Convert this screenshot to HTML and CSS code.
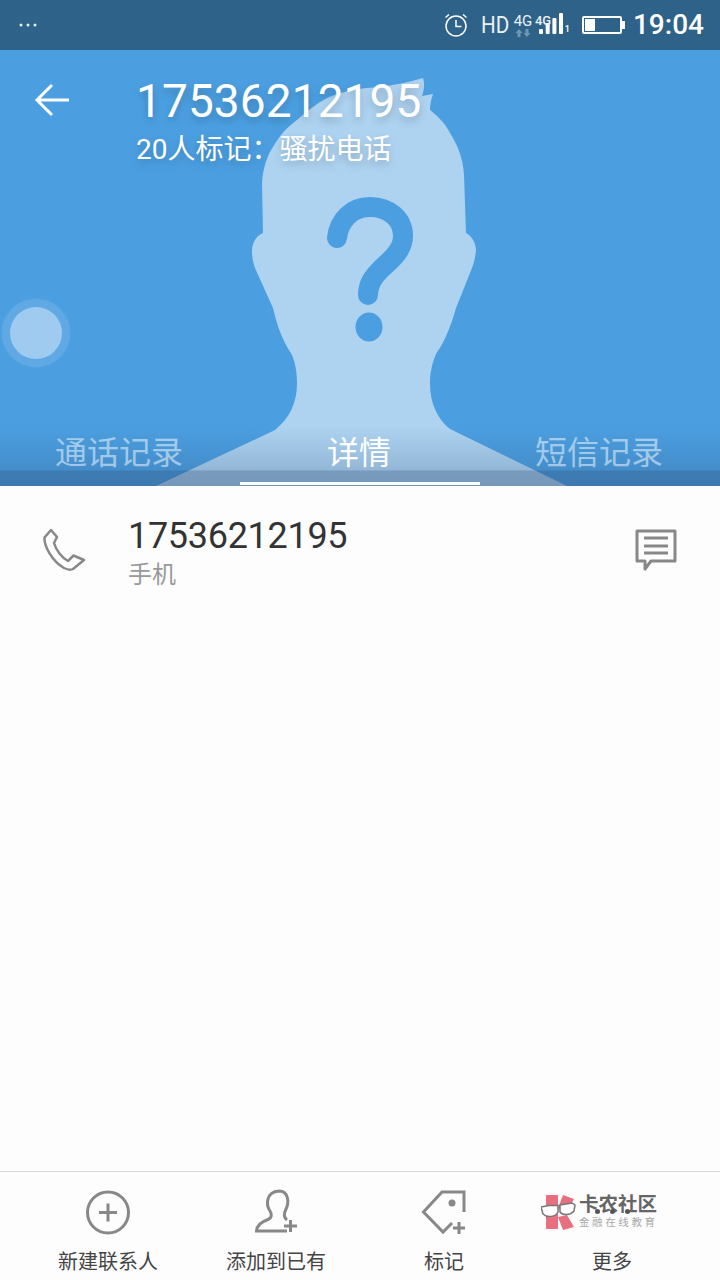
FILE: index.html
```html
<!DOCTYPE html>
<html lang="zh-CN">
<head>
  <meta charset="UTF-8" />
  <meta name="viewport" content="width=device-width, initial-scale=1.0"/>
  <title>17536212195</title>
  <link rel="stylesheet" href="styles.css">
</head>
<body>
  <div class="status-bar">
    <svg class="status-more" width="18" height="4" viewBox="0 0 18 4"><circle cx="2" cy="2" r="1.5"/><circle cx="9" cy="2" r="1.5"/><circle cx="16" cy="2" r="1.5"/></svg>
    <div class="status-right">
      <svg class="alarm" width="24" height="24" viewBox="0 0 24 24">
        <circle cx="12" cy="13" r="10"/>
        <path d="M12 7v6.500h5.500"/>
        <path d="M1.500 4.500 5 1.500M22.500 4.500 19 1.500"/>
      </svg>
      <span class="hd">HD</span>
      <div class="net">
        <span class="net-label">4G</span>
        <svg width="16" height="8" viewBox="0 0 16 8"><path d="M4 0 7.500 4H5.500V8H2.500V4H.5ZM12 8 8.500 4H10.500V0H13.500V4H15.500Z"/></svg>
      </div>
      <div class="signal">
        <span class="net-label small">4G</span>
        <svg width="25" height="22" viewBox="0 0 25 22">
          <rect x="0" y="16" width="4" height="5" rx="1"/>
          <rect x="6.700" y="10" width="4" height="11" rx="1"/>
          <rect x="13.400" y="5" width="4" height="16" rx="1"/>
          <rect x="20" y="0" width="4" height="21" rx="1"/>
        </svg>
        <span class="sim">1</span>
      </div>
      <div class="battery"><div class="battery-level"></div></div>
      <span class="clock">19:04</span>
    </div>
  </div>

  <section class="hero">
    <!-- unknown caller silhouette -->
    <svg class="silhouette" width="720" height="436" viewBox="0 50 720 436">
      <path class="head" d="M423 78 C425 84 424 90 422 96 L433 94 C431 100 430 105 430 110 C440 118 446 125 450 133 C458 146 463 158 464 175 L466 233 C472 236 476 243 476 251 C475 258 474 263 472 268 L456 308 C452 322 446 340 436 354 C431 366 430 375 430 384 C430 402 437 419 450 429 L567 486 H156 L275 430 C290 418 297 402 297 384 C297 374 296 365 292 355 C282 340 277 325 273 308 L255 268 C253 262 252 257 252 251 C252 243 256 236 263 233 L262 183 C263 168 267 156 273 147 C279 136 287 127 297 120 C306 112 316 104 327 98 C346 90 362 88 380 87 C395 85 410 82 423 78 Z"/>
      <path class="mark" d="M337 238 C339 220 352 207 370 207 C389 207 403 219 403 236 C403 250 392 259 382 268 C373 277 368 284 368 295"/>
      <ellipse class="mark-dot" cx="369" cy="327" rx="13.500" ry="14.500"/>
    </svg>

    <div class="hero-head">
      <svg class="back" width="36" height="34" viewBox="0 0 36 34"><path d="M35 17H3M18 2 3 17 18 32"/></svg>
      <div>
        <h1 class="hero-number">17536212195</h1>
        <p class="hero-tag">20人标记：骚扰电话</p>
      </div>
    </div>

    <div class="tabs">
      <div class="tab">通话记录</div>
      <div class="tab active">详情</div>
      <div class="tab">短信记录</div>
    </div>
    <div class="float-ball"></div>
  </section>

  <main class="detail">
    <div class="phone-row">
      <svg class="row-icon phone" width="44" height="44" viewBox="42 528 44 44">
        <path d="M51 530 44.500 537.500C44 546 52 561 64 568C67 569.500 71 570 73 569L84 560 73.500 555.500 68 561C62 558 56 550 54 543L57 537Z"/>
      </svg>
      <div class="row-text">
        <div class="row-number">17536212195</div>
        <div class="row-kind">手机</div>
      </div>
      <svg class="row-icon" width="44" height="44" viewBox="634 528 44 44">
        <path d="M637 531H675V561H651L645 569V561H637Z"/>
        <path d="M644 538H668M644 546H668M644 553H668"/>
      </svg>
    </div>
  </main>

  <nav class="actions">
    <div class="action">
      <svg class="action-icon" width="48" height="48" viewBox="84 1188 48 48">
        <circle cx="108" cy="1212.500" r="20.500"/>
        <path d="M99 1212.500H117M108 1203.500V1221.500"/>
      </svg>
      <span>新建联系人</span>
    </div>
    <div class="action">
      <svg class="action-icon" width="48" height="48" viewBox="252 1188 48 48">
        <path d="M287 1231H256.500C256.500 1225 261 1222 268 1219.500C272 1218 272 1214 270 1211C266 1205 265.500 1192 279 1191C289 1191 289 1203 286 1209C284 1213 283 1217 287 1220"/>
        <path d="M284 1226H297M290.500 1220V1232"/>
      </svg>
      <span>添加到已有</span>
    </div>
    <div class="action">
      <svg class="action-icon" width="48" height="48" viewBox="420 1188 48 48">
        <path d="M464 1212V1192H442L423.500 1212 443 1232 452 1223"/>
        <circle class="icon-fill" cx="452" cy="1203" r="3.500"/>
        <path d="M453 1228H465M459 1222V1234"/>
      </svg>
      <span>标记</span>
    </div>
    <div class="action">
      <div class="watermark">
        <svg width="38" height="37" viewBox="0 0 38 37">
          <path class="wm-pink" d="M5 1H17V35H5Z"/>
          <path class="wm-pink" d="M17 14 22 1 33 5 26 18Z"/>
          <path class="wm-pink" d="M17 23 26 21 33 33 22 36Z"/>
          <path class="wm-glass" d="M0 13 8 11.500H17V18C15 23 6 24 2 20Z"/>
          <path class="wm-glass" d="M19 11 31 9 34 11 33 17C30 21 22 22 19 18Z"/>
        </svg>
        <div class="wm-text">
          <div class="wm-title">卡农社区</div>
          <div class="wm-sub">金融在线教育</div>
        </div>
        <div class="more-dots"><i></i><i></i><i></i></div>
      </div>
      <span>更多</span>
    </div>
  </nav>
</body>
</html>
```

FILE: styles.css
```css
* {
  box-sizing: border-box;
}

body {
  margin: 0;
  width: 720px;
  height: 1280px;
  display: flex;
  flex-direction: column;
  overflow: hidden;
  background: #fdfdfd;
  font-family: Roboto, "Noto Sans CJK SC", sans-serif;
}

/* status bar */
.status-bar {
  height: 50px;
  display: flex;
  align-items: center;
  justify-content: space-between;
  padding: 0 16px 0 19px;
  background: #2e6289;
  color: #fff;
}

.status-more {
  fill: #e6eef4;
}

.status-right {
  display: flex;
  align-items: center;
}

.alarm {
  fill: none;
  stroke: #fff;
  stroke-width: 1.500;
  margin-right: 13px;
}

.hd {
  font-size: 24px;
  transform: scaleX(0.86);
  transform-origin: left;
  width: 32px;
  color: #eaf1f6;
}

.net {
  width: 20px;
  display: flex;
  flex-direction: column;
  align-items: center;
  fill: #6f97b5;
}

.net-label {
  font-size: 15px;
  line-height: 15px;
  color: #eaf1f6;
}

.net-label.small {
  position: absolute;
  top: 1px;
  left: 1px;
  font-size: 13px;
  line-height: 14px;
  font-weight: 500;
}

.signal {
  position: relative;
  width: 38px;
  height: 24px;
  margin-left: 1px;
  fill: #fff;
}

.signal svg {
  display: block;
  margin-left: 5px;
}

.sim {
  position: absolute;
  right: 2px;
  bottom: 3px;
  font-size: 9px;
  line-height: 9px;
  font-weight: 500;
}

.battery {
  position: relative;
  width: 40px;
  height: 18px;
  margin: 0 11px 0 10px;
  padding: 1px 0 1px 1px;
  border: 2px solid #fff;
  border-radius: 2px;
}

.battery::after {
  content: "";
  position: absolute;
  top: 3px;
  right: -5px;
  width: 3px;
  height: 8px;
  background: #fff;
}

.battery-level {
  width: 10px;
  height: 100%;
  background: #fff;
}

.clock {
  font-size: 28px;
  font-weight: 500;
  line-height: 32px;
}

/* hero */
.hero {
  position: relative;
  height: 436px;
  display: flex;
  flex-direction: column;
  background: #4b9fe1;
  overflow: hidden;
  color: #fff;
}

.silhouette {
  position: absolute;
  top: 0;
  left: 0;
}

.head {
  fill: #aed3f1;
}

.mark {
  fill: none;
  stroke: #4b9fe1;
  stroke-width: 20;
  stroke-linecap: round;
}

.mark-dot {
  fill: #4b9fe1;
}

.hero-head {
  position: relative;
  display: flex;
  padding: 24px 0 0 34px;
}

.back {
  fill: none;
  stroke: #fff;
  stroke-width: 3;
  margin: 9px 66px 0 0;
}

.hero-number {
  margin: 0;
  font-size: 46px;
  font-weight: 400;
  line-height: 54px;
  letter-spacing: 0.100px;
  text-shadow: 0 4px 8px rgba(0, 0, 0, 0.22);
}

.hero-tag {
  margin: 3px 0 0;
  font-size: 28px;
  line-height: 38px;
  text-shadow: 0 4px 8px rgba(0, 0, 0, 0.22);
}

.tabs {
  position: relative;
  margin-top: auto;
  height: 60px;
  display: flex;
  padding-bottom: 1px;
  background: linear-gradient(rgba(40, 70, 110, 0) 0, rgba(40, 70, 110, 0.2) 44px, rgba(40, 70, 110, 0.4) 45px, rgba(40, 70, 110, 0.42) 100%);
}

.tab {
  flex: 1;
  padding-right: 2px;
  text-align: center;
  font-size: 32px;
  line-height: 54px;
  color: rgba(255, 255, 255, 0.5);
}

.tab.active {
  color: #fff;
  border-bottom: 3px solid #fff;
}

.float-ball {
  position: absolute;
  left: 10px;
  top: 257px;
  width: 52px;
  height: 52px;
  border-radius: 50%;
  background: #9ecbef;
  box-shadow: 0 0 0 8px rgba(255, 255, 255, 0.07), 0 0 0 9px rgba(255, 255, 255, 0.05);
}

/* number row */
.detail {
  flex: 1;
}

.phone-row {
  display: flex;
  padding: 28px 42px 0 42px;
}

.row-icon {
  fill: none;
  stroke: #888;
  stroke-width: 3;
  stroke-linejoin: round;
  margin-top: 14px;
}

.row-icon.phone {
  stroke-width: 2.500;
}

.row-text {
  flex: 1;
  margin-left: 42px;
}

.row-number {
  font-size: 36px;
  line-height: 44px;
  letter-spacing: -0.300px;
  color: #333;
}

.row-kind {
  font-size: 24px;
  line-height: 34px;
  color: #999;
}

/* bottom actions */
.actions {
  height: 109px;
  display: grid;
  grid-template-columns: repeat(4, 168px);
  padding: 0 24px;
  border-top: 1px solid #d8d8d8;
}

.action {
  display: flex;
  flex-direction: column;
  align-items: center;
  padding-top: 16px;
  font-size: 20px;
  line-height: 28px;
  color: #444;
}

.action span {
  margin-top: 12px;
}

.action-icon {
  display: block;
  fill: none;
  stroke: #888;
  stroke-width: 3;
}

.action-icon .icon-fill {
  fill: #888;
  stroke: none;
}

.watermark {
  position: relative;
  width: 130px;
  height: 48px;
  display: flex;
  align-items: center;
  align-self: flex-start;
  margin: 0 0 0 13px;
}

.wm-pink {
  fill: #e8707e;
}

.wm-glass {
  fill: #fff;
  stroke: #777;
  stroke-width: 1.500;
}

.wm-title {
  font-size: 19.500px;
  line-height: 21px;
  font-weight: 700;
  color: #666;
}

.wm-sub {
  margin-top: 1px;
  font-size: 10.500px;
  line-height: 14px;
  letter-spacing: 2.600px;
  color: #aaa;
}

.more-dots {
  position: absolute;
  left: 54px;
  top: 21px;
  display: flex;
  gap: 10px;
}

.more-dots i {
  width: 5px;
  height: 5px;
  border-radius: 50%;
  background: #555;
}
```
